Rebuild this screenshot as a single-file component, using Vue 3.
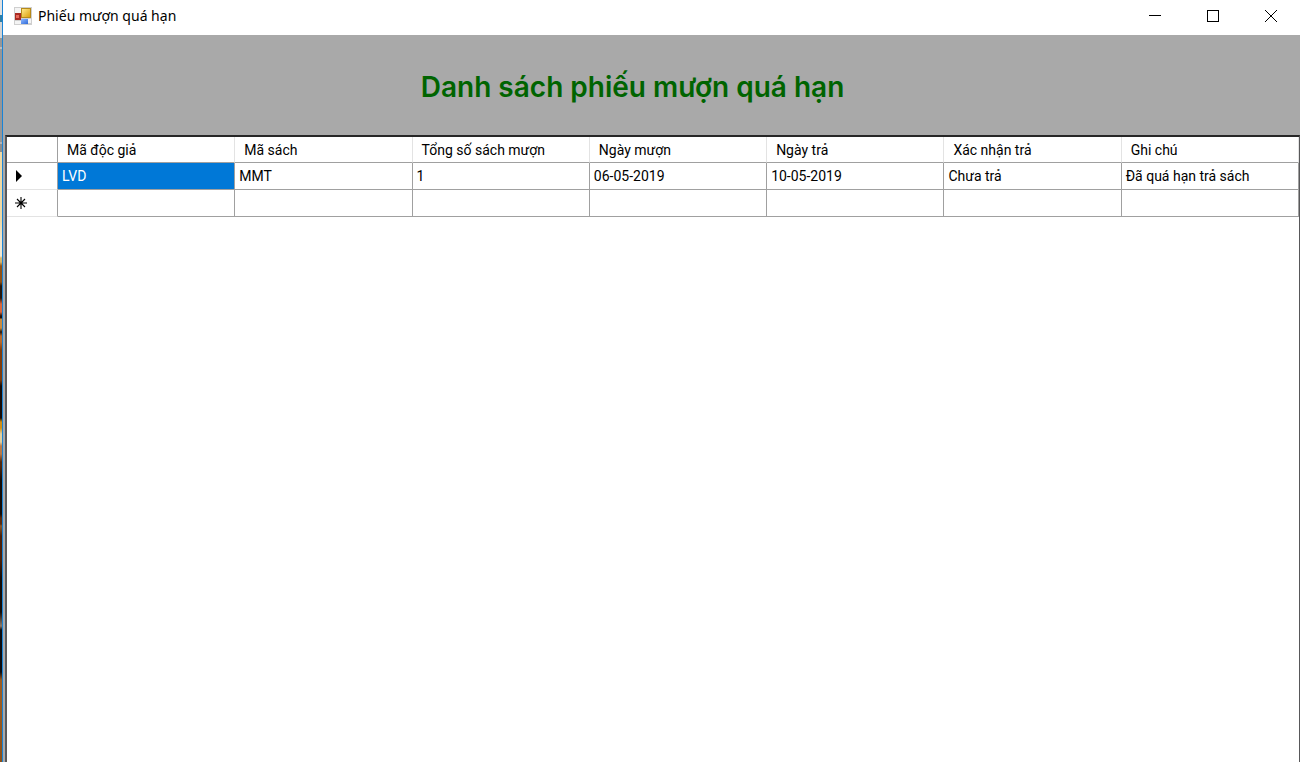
<script setup>
const columns = [
  'Mã độc giả',
  'Mã sách',
  'Tổng số sách mượn',
  'Ngày mượn',
  'Ngày trả',
  'Xác nhận trả',
  'Ghi chú',
]
const rows = [
  ['LVD', 'MMT', '1', '06-05-2019', '10-05-2019', 'Chưa trả', 'Đã quá hạn trả sách'],
]
</script>

<template>
  <div class="desktop">
    <div class="backdrop" aria-hidden="true"></div>
    <main class="window">
      <header class="titlebar">
        <svg class="app-icon" width="18" height="18" viewBox="0 0 18 18" aria-hidden="true">
          <defs>
            <linearGradient id="gold" x1="0" y1="0" x2="1" y2="1">
              <stop offset="0" stop-color="#ffe98a" />
              <stop offset="1" stop-color="#dda00c" />
            </linearGradient>
            <linearGradient id="azure" x1="0" y1="0" x2="1" y2="1">
              <stop offset="0" stop-color="#8db8ff" />
              <stop offset="1" stop-color="#2f6ad8" />
            </linearGradient>
          </defs>
          <rect width="18" height="18" fill="#cfcfcf" />
          <path d="M1 1h6v5H1zM1 14h6v3H1zM14 12h3v4h-3z" fill="#f4f4f4" />
          <rect x="1" y="6" width="6" height="7" fill="#a82a22" />
          <rect x="2" y="8" width="3" height="3" fill="#e8685a" />
          <rect x="7" y="1" width="10" height="10" fill="#b58a1c" />
          <rect x="8" y="2" width="8" height="8" fill="url(#gold)" />
          <rect x="7" y="12" width="7" height="5" fill="url(#azure)" />
        </svg>
        <h1 class="caption">Phiếu mượn quá hạn</h1>
        <button class="control" type="button" aria-label="Thu nhỏ">
          <svg width="12" height="12" viewBox="0 0 12 12" shape-rendering="crispEdges"><path d="M0 5.5h12" /></svg>
        </button>
        <button class="control" type="button" aria-label="Phóng to">
          <svg width="12" height="12" viewBox="0 0 12 12" shape-rendering="crispEdges"><path d="M.5.5h11v11H.5z" /></svg>
        </button>
        <button class="control" type="button" aria-label="Đóng">
          <svg width="12" height="12" viewBox="0 0 12 12"><path d="M0 0l12 12M12 0L0 12" /></svg>
        </button>
      </header>
      <section class="banner">
        <h2 class="heading">Danh sách phiếu mượn quá hạn</h2>
      </section>
      <section class="grid">
        <table class="table">
          <thead>
            <tr>
              <th class="marker"></th>
              <th v-for="name in columns" :key="name" scope="col">{{ name }}</th>
            </tr>
          </thead>
          <tbody>
            <tr v-for="(row, r) in rows" :key="r">
              <td class="marker">
                <svg width="7" height="12" viewBox="0 0 7 12"><path d="M1 0l6 6-6 6z" fill="#000" /></svg>
              </td>
              <td v-for="(value, c) in row" :key="c" :class="{ selected: r === 0 && c === 0 }">{{ value }}</td>
            </tr>
            <tr>
              <td class="marker">
                <svg width="12" height="12" viewBox="0 0 12 12"><path d="M0 6h12M6 0v12M2 2l8 8M10 2l-8 8" stroke="#000" stroke-width="1.1" /></svg>
              </td>
              <td v-for="name in columns" :key="name"></td>
            </tr>
          </tbody>
        </table>
      </section>
    </main>
  </div>
</template>

<style>
body {
  margin: 0;
}
</style>

<style scoped>
.desktop {
  display: flex;
  min-height: 100vh;
  font-family: Roboto, "Liberation Sans", sans-serif;
  color: #000;
}
.backdrop {
  flex: none;
  width: 2px;
  background: linear-gradient(
    #e2e2e2 0 15px, #2f7fa6 15px 22px, #d4d4d4 22px 38px, #969696 38px 47px,
    #bdbdbd 47px 49px, #969696 49px 142px, #b4b4b4 142px 144px, #8c8c8c 144px 152px,
    #efd9a4 152px 220px, #f1e8d2 240px 256px, #d8b66c 258px 262px, #8f5115 266px 282px,
    #24160c 286px 298px, #d9673c 304px 312px, #20120a 316px 318px, #c98a3e 319px 328px,
    #24140a 332px, #b96a2c 336px 342px, #7e3c0c 350px 380px, #150b06 386px 418px,
    #d18f14 422px 428px, #e0cfa0 434px 442px, #b97a48 446px 454px, #50280e 462px 466px,
    #120a06 480px 514px, #5a2a0c 518px 524px, #8a5a2c 526px, #4a1f08 536px 560px,
    #2a1408 570px, #120a06 578px 612px, #8f7a68 626px, #0a0a0e 630px 672px,
    #9a5c22 680px 700px, #8a5018 762px
  );
}
.window {
  flex: 1;
  min-width: 0;
  display: flex;
  flex-direction: column;
  border-left: 1px solid #1883d7;
  background: #a9a9a9;
}
.titlebar {
  display: flex;
  align-items: center;
  height: 32px;
  padding: 0 0 3px 11px;
  background: #fff;
}
.app-icon {
  margin-right: 6px;
}
.caption {
  flex: 1;
  margin: 0;
  font: 400 14px/20px "Noto Sans", sans-serif;
}
.control {
  display: flex;
  align-items: center;
  justify-content: center;
  width: 58px;
  height: 32px;
  padding: 0;
  border: 0;
  background: none;
}
.control path {
  fill: none;
  stroke: #000;
}
.banner {
  display: flex;
  align-items: center;
  justify-content: center;
  height: 96px;
  padding: 4px 38px 0 0;
}
.heading {
  margin: 0;
  font: 600 28px/36px Inter, "Liberation Sans", sans-serif;
  color: #006400;
}
.grid {
  flex: 1;
  margin-left: 2px;
  border: solid #58585a;
  border-width: 2px 1px 0 2px;
  border-top-color: #262626;
  background: #fff;
}
.table {
  width: 100%;
  table-layout: fixed;
  border-collapse: separate;
  border-spacing: 0;
  font-size: 14px;
  line-height: 18px;
}
th,
td {
  height: 26px;
  padding: 0 4px;
  border: solid #a0a0a0;
  border-width: 0 1px 1px 0;
  text-align: left;
  font-weight: 400;
  white-space: nowrap;
}
th {
  height: 25px;
  padding: 0 9px;
  border-right-color: #e3e3e3;
}
.marker {
  width: 51px;
  padding: 0 0 0 8px;
  box-sizing: border-box;
}
th.marker {
  border-right-color: #a0a0a0;
}
td.marker {
  border-bottom-color: #e3e3e3;
}
.marker svg {
  display: block;
}
.selected {
  background: #0078d7;
  color: #fff;
}
</style>
